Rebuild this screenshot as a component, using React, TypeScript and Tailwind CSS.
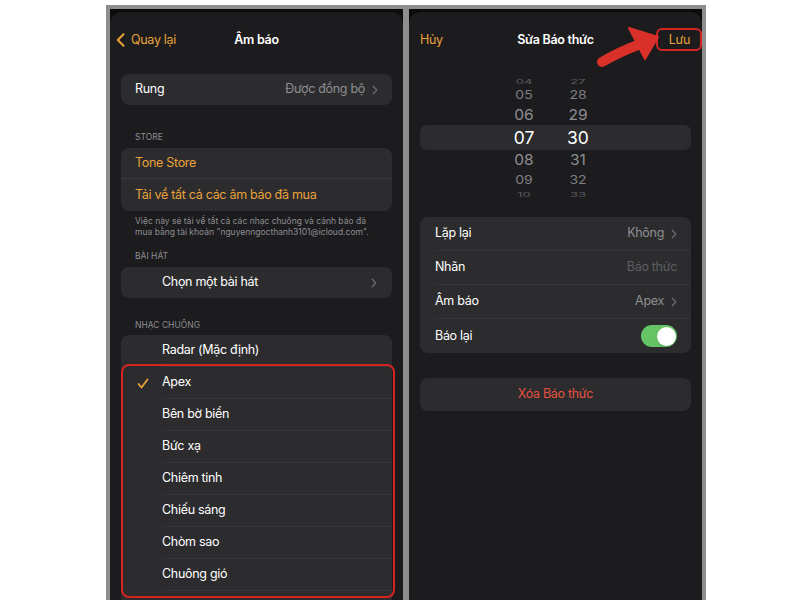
import React from "react";

const Chevron: React.FC<{ className?: string }> = ({ className = "" }) => (
  <svg width="6" height="10" viewBox="0 0 6 10" className={className}>
    <path
      d="M1.2 1.2 4.8 5 1.2 8.8"
      fill="none"
      stroke="currentColor"
      strokeWidth="1.3"
      strokeLinecap="round"
      strokeLinejoin="round"
    />
  </svg>
);

const Check: React.FC = () => (
  <svg width="12" height="11" viewBox="0 0 12 11" className="text-[#e9a23b]">
    <path
      d="M1.5 6 4.5 9.5 10.5 1.5"
      fill="none"
      stroke="currentColor"
      strokeWidth="1.8"
      strokeLinecap="round"
      strokeLinejoin="round"
    />
  </svg>
);

const SectionHeader: React.FC<{ text: string; className: string }> = ({ text, className }) => (
  <div className={`px-[14px] text-[8.5px] leading-[11px] tracking-normal uppercase text-[#8d8d92] ${className}`}>{text}</div>
);

const TONES = ["Radar (Mặc định)", "Apex", "Bên bờ biển", "Bức xạ", "Chiêm tinh", "Chiếu sáng", "Chòm sao", "Chuông gió"];

const LeftPhone: React.FC = () => (
  <div className="relative flex w-[293px] flex-col overflow-hidden bg-[#0c0c0c]">
    <div className="mt-[3px] flex flex-1 flex-col rounded-t-[12px] bg-[#1c1c1e]">
      <div className="grid h-[56px] grid-cols-[1fr_auto_1fr] items-center">
        <div className="flex items-center gap-[6px] pl-[6px] text-[12.5px] text-[#e9a23b]">
          <svg width="9" height="14" viewBox="0 0 9 14">
            <path d="M7.5 1.2 1.8 7l5.7 5.8" fill="none" stroke="currentColor" strokeWidth="2" strokeLinecap="round" strokeLinejoin="round" />
          </svg>
          <span>Quay lại</span>
        </div>
        <div className="text-[12.5px] font-semibold text-white">Âm báo</div>
        <div />
      </div>

      <div className="flex flex-1 flex-col px-[11px]">
        <div className="mt-[6px] flex h-[31px] items-center justify-between rounded-[8px] bg-[#2c2c2e] pl-[14px] pr-[14px] text-[12.5px]">
          <span className="text-white">Rung</span>
          <span className="flex items-center gap-[7px] text-[#8e8e93]">
            Được đồng bộ <Chevron className="text-[#6c6c70]" />
          </span>
        </div>

        <SectionHeader text="Store" className="pt-[27px] pb-[5px]" />
        <div className="flex flex-col rounded-[8px] bg-[#2c2c2e] text-[12.5px] text-[#e9a23b]">
          <div className="flex h-[31px] items-center border-b border-[#3a3a3c] pl-[14px]">Tone Store</div>
          <div className="flex h-[32px] items-center pl-[14px]">Tải về tất cả các âm báo đã mua</div>
        </div>
        <div className="px-[14px] pt-[5px] text-[8.5px] leading-[11px] tracking-normal text-[#8d8d92]">
          Việc này sẽ tải về tất cả các nhạc chuông và cảnh báo đã mua bằng tài khoản "nguyenngocthanh3101@icloud.com".
        </div>

        <SectionHeader text="Bài hát" className="pt-[13px] pb-[5px]" />
        <div className="flex h-[31px] items-center justify-between rounded-[8px] bg-[#2c2c2e] pl-[41px] pr-[15px] text-[12.5px] text-white">
          <span>Chọn một bài hát</span>
          <Chevron className="text-[#6c6c70]" />
        </div>

        <SectionHeader text="Nhạc chuông" className="pt-[22px] pb-[4px]" />
        <div className="flex flex-1 flex-col rounded-t-[8px] bg-[#2c2c2e] text-[12.5px] text-white">
          {TONES.map((t) => (
            <div key={t} className="flex h-[32px] items-center">
              <div className="flex w-[41px] justify-center pl-[2px]">{t === "Apex" && <Check />}</div>
              <div className="flex h-full flex-1 items-center border-b border-[#363638]">{t}</div>
            </div>
          ))}
        </div>
      </div>
    </div>

    {/* annotation box */}
    <div className="absolute left-[11px] top-[355px] h-[234px] w-[274px] rounded-[8px] border-2 border-[#d42525]" />
  </div>
);

const PICKER = [
  { h: "04", m: "27", row: "h-[10px]", txt: "text-[13px] scale-y-[0.45] text-[#5c5c60]" },
  { h: "05", m: "28", row: "h-[18px]", txt: "text-[14px] scale-y-[0.82] text-[#7e7e82]" },
  { h: "06", m: "29", row: "h-[21px]", txt: "text-[15.5px] scale-y-[0.95] text-[#8e8e93]" },
  { h: "07", m: "30", row: "h-[25px] rounded-[7px] bg-[#2c2c2e]", txt: "text-[17.5px] text-white" },
  { h: "08", m: "31", row: "h-[20px]", txt: "text-[15.5px] scale-y-[0.95] text-[#8e8e93]" },
  { h: "09", m: "32", row: "h-[19px]", txt: "text-[14px] scale-y-[0.82] text-[#7e7e82]" },
  { h: "10", m: "33", row: "h-[10px] overflow-hidden", txt: "text-[13px] scale-y-[0.45] text-[#5c5c60]" },
];

const SettingRow: React.FC<{ label: string; children: React.ReactNode; last?: boolean }> = ({ label, children, last }) => (
  <div className="flex h-[34px] items-stretch pl-[15px]">
    <div className={`flex flex-1 items-center justify-between pr-[14px] ${last ? "" : "border-b border-[#363638]"}`}>
      <span className="text-white">{label}</span>
      {children}
    </div>
  </div>
);

const RightPhone: React.FC = () => (
  <div className="relative flex w-[293px] flex-col overflow-hidden bg-[#0c0c0c]">
    <div className="mt-[3px] flex flex-1 flex-col rounded-t-[12px] bg-[#1c1c1e]">
      <div className="grid h-[56px] grid-cols-[1fr_auto_1fr] items-center text-[12.5px]">
        <span className="pl-[11px] text-[#e9a23b]">Hủy</span>
        <span className="font-semibold text-white">Sửa Báo thức</span>
        <span className="pr-[12px] text-right text-[#e9a23b]">Lưu</span>
      </div>

      <div className="mt-[8px] flex flex-col px-[11px] tracking-normal">
        {PICKER.map((p) => (
          <div key={p.h} className={`flex items-center pl-[84px] ${p.row}`}>
            <div className={`w-[40px] text-center leading-none ${p.txt}`}>{p.h}</div>
            <div className={`ml-[14px] w-[40px] text-center leading-none ${p.txt}`}>{p.m}</div>
          </div>
        ))}
      </div>

      <div className="mx-[11px] mt-[18px] flex flex-col rounded-[8px] bg-[#2c2c2e] text-[12.5px]">
        <SettingRow label="Lặp lại">
          <span className="flex items-center gap-[7px] text-[#8e8e93]">
            Không <Chevron className="text-[#6c6c70]" />
          </span>
        </SettingRow>
        <SettingRow label="Nhãn">
          <span className="text-[#5f5f63]">Báo thức</span>
        </SettingRow>
        <SettingRow label="Âm báo">
          <span className="flex items-center gap-[7px] text-[#8e8e93]">
            Apex <Chevron className="text-[#6c6c70]" />
          </span>
        </SettingRow>
        <SettingRow label="Báo lại" last>
          <div className="flex h-[22px] w-[36px] items-center justify-end rounded-full bg-[#65c466] p-[1.5px]">
            <div className="h-[19px] w-[19px] rounded-full bg-white shadow" />
          </div>
        </SettingRow>
      </div>

      <div className="mx-[11px] mt-[25px] flex h-[33px] items-center justify-center rounded-[8px] bg-[#2c2c2e] text-[12.5px] text-[#e5533f]">
        Xóa Báo thức
      </div>
    </div>

    {/* annotations */}
    <div className="absolute left-[247px] top-[19px] h-[23px] w-[46px] rounded-[6px] border-2 border-[#d42525]" />
    <svg className="absolute left-[186px] top-[17px]" width="74" height="54" viewBox="595 26 74 54">
      <path d="M602 62 Q619 52 638 45" fill="none" stroke="#d9302a" strokeWidth="10" strokeLinecap="round" />
      <path d="M629 28 L658 37 L645 59 Z" fill="#d9302a" stroke="#d9302a" strokeWidth="2" strokeLinejoin="round" />
    </svg>
  </div>
);

export default function App() {
  return (
    <div className="h-[600px] w-[800px] overflow-hidden bg-white font-['Inter',sans-serif] tracking-[-0.3px]">
      <div className="ml-[106px] mt-[5px] flex h-[595px] w-[600px] gap-[6px] bg-[#8e8e8e] pl-[4px] pr-[4px] pt-[4px]">
        <LeftPhone />
        <RightPhone />
      </div>
    </div>
  );
}
